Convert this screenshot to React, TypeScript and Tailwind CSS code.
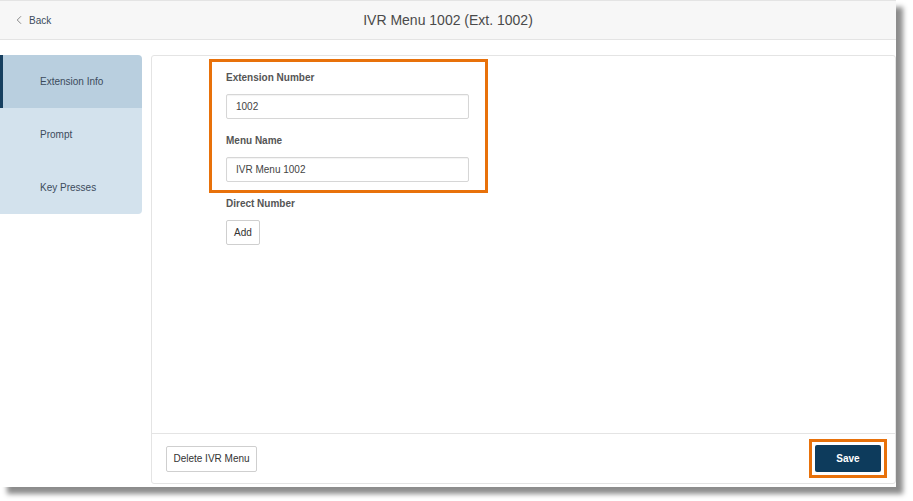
import React from 'react';
import { ChevronLeft } from 'lucide-react';

const font = { fontFamily: '"Liberation Sans", Arial, sans-serif' };

const SideItem: React.FC<{ label: string; active?: boolean }> = ({ label, active }) => (
    <div
        className={`relative h-[53px] flex items-center pl-[40px] text-[10px] text-[#3b4b5c] ${
            active ? 'bg-[#b9cfdf]' : 'bg-[#d3e2ed]'
        }`}
    >
        {active && <div className="absolute left-0 top-0 bottom-0 w-[3px] bg-[#163f5f]" />}
        {label}
    </div>
);

const Field: React.FC<{ label: string; value: string; last?: boolean }> = ({ label, value, last }) => (
    <div className={last ? '' : 'mb-[15px]'}>
        <div className="text-[10px] leading-[14px] font-bold text-[#555] mb-[9px]">{label}</div>
        <div className="h-[25px] border border-[#d6d6d6] rounded-[2px] flex items-center px-[9px] text-[10px] text-[#444] shadow-[inset_0_1px_1px_rgba(0,0,0,0.05)]">
            {value}
        </div>
    </div>
);

export default function App() {
    return (
        <div className="w-[913px] h-[501px] bg-white overflow-hidden" style={font}>
            <div className="w-[896px] h-[487px] bg-white flex flex-col shadow-[7px_7px_5px_rgba(0,0,0,0.45)]">
                {/* Header */}
                <div className="relative h-[40px] bg-[#f7f7f7] border-t border-b border-[#e4e4e4] flex items-center">
                    <div className="flex items-center gap-[3px] pl-[12px] text-[10px] text-[#3b4b5c]">
                        <ChevronLeft className="w-[14px] h-[14px] text-[#666]" strokeWidth={1.3} />
                        Back
                    </div>
                    <div className="absolute inset-0 flex items-center justify-center text-[14px] text-[#4a4a4a]">
                        IVR Menu 1002 (Ext. 1002)
                    </div>
                </div>

                {/* Body */}
                <div className="flex-1 flex gap-[9px] pt-[15px] pb-[3px]">
                    {/* Sidebar */}
                    <div className="w-[142px] self-start rounded-r-[4px] overflow-hidden">
                        <SideItem label="Extension Info" active />
                        <SideItem label="Prompt" />
                        <SideItem label="Key Presses" />
                    </div>

                    {/* Panel */}
                    <div className="flex-1 border border-[#e4e4e4] rounded-[3px] flex flex-col">
                        <div className="flex-1 pl-[74px] pt-[3px]">
                            <div className="w-[243px]">
                                <div className="-ml-[17px] -mr-[19px] border-[3px] border-[#e8710a] pl-[14px] pr-[16px] pt-[9px] pb-[8px]">
                                    <Field label="Extension Number" value="1002" />
                                    <Field label="Menu Name" value="IVR Menu 1002" last />
                                </div>
                                <div className="mt-[4px] text-[10px] leading-[14px] font-bold text-[#555] mb-[8px]">
                                    Direct Number
                                </div>
                                <button className="h-[25px] w-[34px] border border-[#cfcfcf] rounded-[2px] bg-white text-[10px] text-[#333]">
                                    Add
                                </button>
                            </div>
                        </div>

                        {/* Footer */}
                        <div className="h-[50px] border-t border-[#e4e4e4] flex items-center justify-between pl-[14px] pr-[8px]">
                            <button className="h-[26px] w-[91px] border border-[#cfcfcf] rounded-[2px] bg-white text-[10px] text-[#333]">
                                Delete IVR Menu
                            </button>
                            <div className="border-[3px] border-[#e8710a] p-[3px]">
                                <button className="h-[27px] w-[66px] bg-[#0d3b5c] rounded-[2px] text-white text-[10px] font-bold">
                                    Save
                                </button>
                            </div>
                        </div>
                    </div>
                </div>
            </div>
        </div>
    );
}
